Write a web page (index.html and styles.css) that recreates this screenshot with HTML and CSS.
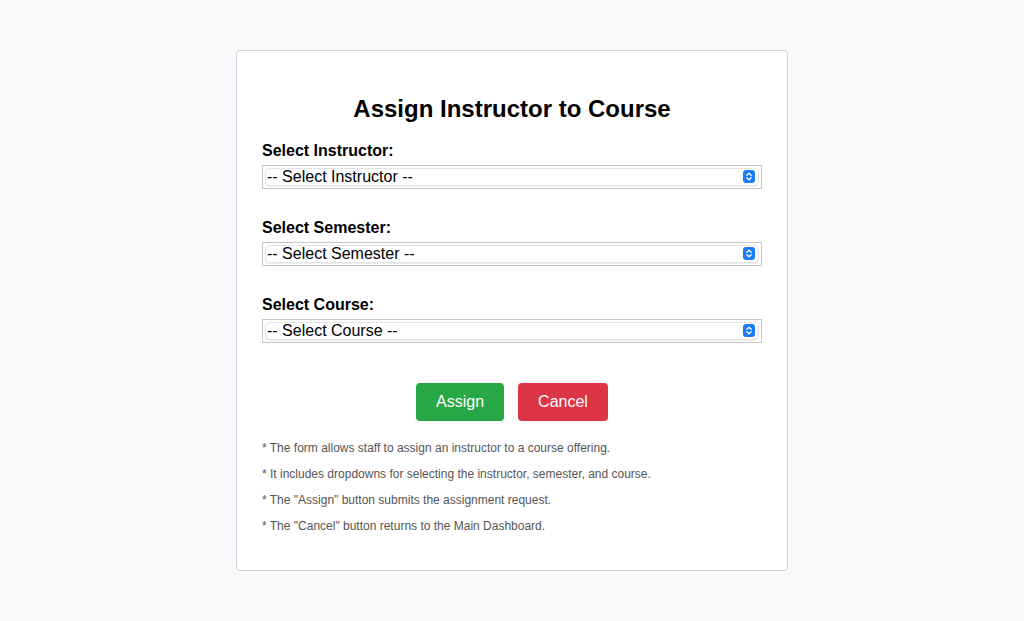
FILE: index.html
```html
<!DOCTYPE html>
<html lang="en">
<head>
<meta charset="utf-8">
<title>Assign Instructor to Course</title>
<link rel="stylesheet" href="styles.css">
</head>
<body>
<div class="card">
  <h2 class="title">Assign Instructor to Course</h2>
  <form class="form">
    <div class="group">
      <label class="label" for="instructor">Select Instructor:</label>
      <div class="select-box">
        <select id="instructor" class="select"><option>-- Select Instructor --</option></select>
        <svg class="stepper" viewBox="0 0 12 13" width="12" height="13" aria-hidden="true"><rect x="0" y="0" width="12" height="13" rx="3" fill="#1a7cf6"/><path d="M3.8 5.2 L6 3.2 L8.2 5.2 M3.8 7.8 L6 9.8 L8.2 7.8" fill="none" stroke="#fff" stroke-width="1.3" stroke-linecap="round" stroke-linejoin="round"/></svg>
      </div>
    </div>
    <div class="group">
      <label class="label" for="semester">Select Semester:</label>
      <div class="select-box">
        <select id="semester" class="select"><option>-- Select Semester --</option></select>
        <svg class="stepper" viewBox="0 0 12 13" width="12" height="13" aria-hidden="true"><rect x="0" y="0" width="12" height="13" rx="3" fill="#1a7cf6"/><path d="M3.8 5.2 L6 3.2 L8.2 5.2 M3.8 7.8 L6 9.8 L8.2 7.8" fill="none" stroke="#fff" stroke-width="1.3" stroke-linecap="round" stroke-linejoin="round"/></svg>
      </div>
    </div>
    <div class="group">
      <label class="label" for="course">Select Course:</label>
      <div class="select-box">
        <select id="course" class="select"><option>-- Select Course --</option></select>
        <svg class="stepper" viewBox="0 0 12 13" width="12" height="13" aria-hidden="true"><rect x="0" y="0" width="12" height="13" rx="3" fill="#1a7cf6"/><path d="M3.8 5.2 L6 3.2 L8.2 5.2 M3.8 7.8 L6 9.8 L8.2 7.8" fill="none" stroke="#fff" stroke-width="1.3" stroke-linecap="round" stroke-linejoin="round"/></svg>
      </div>
    </div>
    <div class="actions">
      <button type="button" class="btn btn-assign">Assign</button>
      <button type="button" class="btn btn-cancel">Cancel</button>
    </div>
  </form>
  <div class="notes">
    <p class="note">* The form allows staff to assign an instructor to a course offering.</p>
    <p class="note">* It includes dropdowns for selecting the instructor, semester, and course.</p>
    <p class="note">* The "Assign" button submits the assignment request.</p>
    <p class="note">* The "Cancel" button returns to the Main Dashboard.</p>
  </div>
</div>
</body>
</html>
```

FILE: styles.css
```css
html, body {
  margin: 0;
  padding: 0;
}
body {
  background: #f8f9fa;
  font-family: "Liberation Sans", Arial, sans-serif;
  color: #000;
  padding-top: 50px;
}
.card {
  width: 500px;
  margin: 0 auto;
  background: #fff;
  border: 1px solid #ccd2d8;
  border-radius: 4px;
  padding: 25px 25px 25px;
}
.title {
  font-size: 24px;
  font-weight: bold;
  text-align: center;
  margin: 19px 0 19px;
  line-height: 28px;
}
.form {
  display: flex;
  flex-direction: column;
}
.group {
  display: flex;
  flex-direction: column;
  margin-bottom: 30px;
}
.group:nth-child(3) {
  margin-bottom: 40px;
}
.label {
  font-size: 16px;
  font-weight: bold;
  line-height: 18px;
  margin-bottom: 5px;
}
.select-box {
  position: relative;
  height: 24px;
  box-sizing: border-box;
  border: 1px solid #c6c6c6;
  padding: 2px;
}
.select {
  appearance: none;
  -webkit-appearance: none;
  display: block;
  width: 100%;
  height: 18px;
  box-sizing: border-box;
  margin: 0;
  border: 1px solid #e4e4e4;
  border-radius: 5px;
  background: #fff;
  box-shadow: 0 1px 1px rgba(0,0,0,0.08);
  font-family: "Liberation Sans", Arial, sans-serif;
  font-size: 16px;
  line-height: 16px;
  color: #000;
  padding: 0 0 0 1px;
  outline: none;
}
.stepper {
  position: absolute;
  right: 6px;
  top: 4px;
}
.actions {
  display: flex;
  justify-content: center;
  gap: 14px;
}
.btn {
  font-family: "Liberation Sans", Arial, sans-serif;
  font-size: 16px;
  line-height: 18px;
  color: #fff;
  border: none;
  border-radius: 4px;
  padding: 10px 20px;
  cursor: pointer;
}
.btn-assign {
  background: #28a745;
}
.btn-cancel {
  background: #dc3545;
}
.notes {
  margin-top: 20px;
}
.note {
  font-size: 12px;
  line-height: 14px;
  color: #555;
  margin: 0 0 12px;
}
```
